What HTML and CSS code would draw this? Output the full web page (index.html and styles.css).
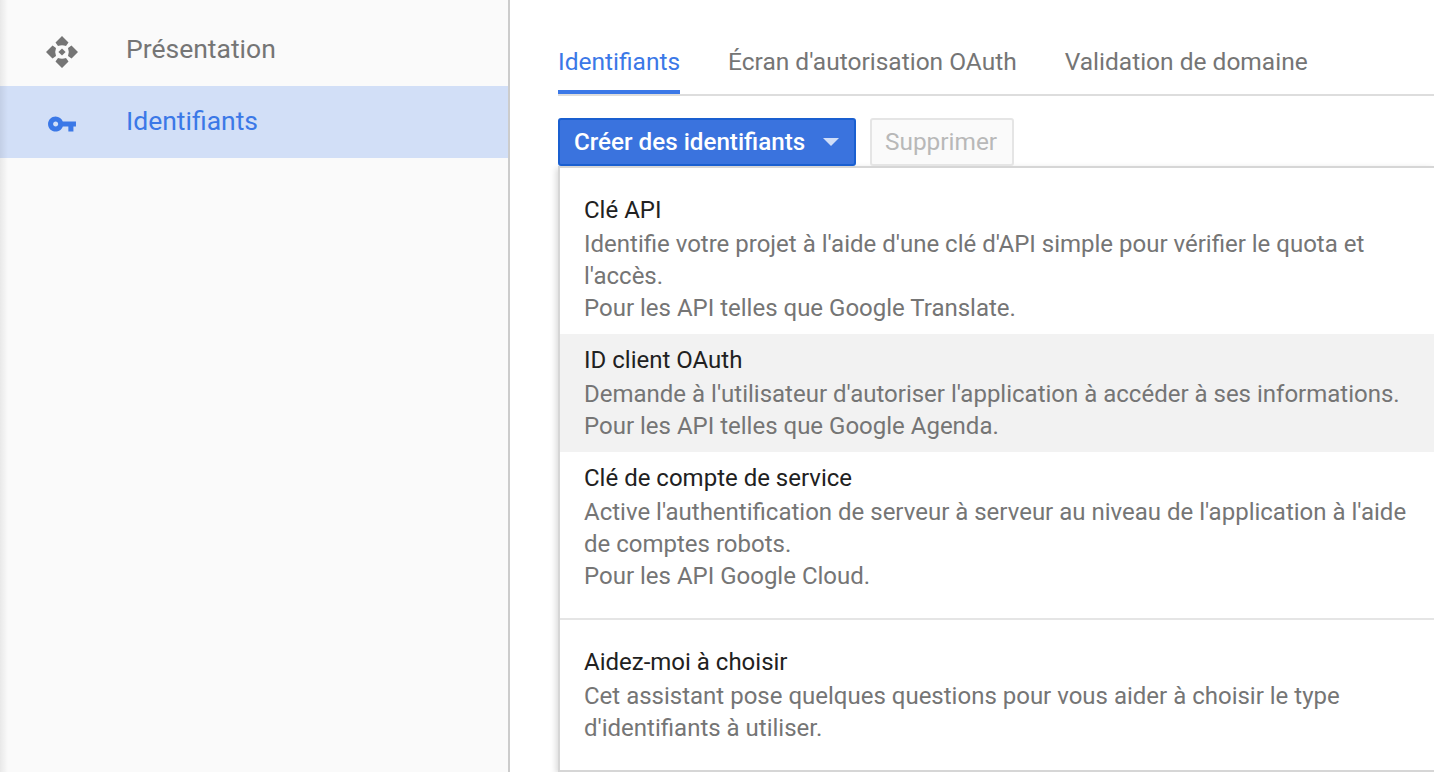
FILE: index.html
```html
<!DOCTYPE html>
<html lang="fr">
<head>
  <meta charset="UTF-8">
  <meta name="viewport" content="width=device-width, initial-scale=1.0">
  <title>Identifiants</title>
  <link rel="stylesheet" href="styles.css">
</head>
<body>

  <nav class="sidebar">
    <a class="nav-item">
      <svg class="nav-icon" viewBox="0 0 32 32" width="32" height="32">
        <g fill="#757575">
          <path d="M16 0l6.500 6.500-2.500 3.500q-4-1.600-8 0L9.500 6.500z"/>
          <path transform="rotate(90 16 16)" d="M16 0l6.500 6.500-2.500 3.500q-4-1.600-8 0L9.500 6.500z"/>
          <path transform="rotate(180 16 16)" d="M16 0l6.500 6.500-2.500 3.500q-4-1.600-8 0L9.500 6.500z"/>
          <path transform="rotate(270 16 16)" d="M16 0l6.500 6.500-2.500 3.500q-4-1.600-8 0L9.500 6.500z"/>
          <path d="M16 12.400l3.600 3.600-3.600 3.600-3.600-3.600z"/>
        </g>
      </svg>
      <span>Présentation</span>
    </a>
    <a class="nav-item active">
      <svg class="nav-icon" viewBox="-0.6 -0.6 25.2 25.2" width="32" height="32">
        <path fill="#3b78e7" d="M12.650 10C11.830 7.670 9.610 6 7 6c-3.310 0-6 2.690-6 6s2.690 6 6 6c2.610 0 4.830-1.670 5.650-4H17v4h4v-4h2v-4H12.650zM7 14c-1.100 0-2-.9-2-2s.9-2 2-2 2 .9 2 2-.9 2-2 2z"/>
      </svg>
      <span>Identifiants</span>
    </a>
  </nav>

  <main class="content">
    <div class="tabs">
      <a class="tab active">Identifiants</a>
      <a class="tab">Écran d'autorisation OAuth</a>
      <a class="tab">Validation de domaine</a>
    </div>

    <div class="toolbar">
      <button class="btn-primary">Créer des identifiants<span class="caret"></span></button>
      <button class="btn-disabled">Supprimer</button>
    </div>

    <div class="menu">
      <div class="menu-item">
        <div class="menu-title">Clé API</div>
        <div class="menu-desc">Identifie votre projet à l'aide d'une clé d'API simple pour vérifier le quota et l'accès.<br>Pour les API telles que Google Translate.</div>
      </div>
      <div class="menu-item hover">
        <div class="menu-title">ID client OAuth</div>
        <div class="menu-desc">Demande à l'utilisateur d'autoriser l'application à accéder à ses informations.<br>Pour les API telles que Google Agenda.</div>
      </div>
      <div class="menu-item">
        <div class="menu-title">Clé de compte de service</div>
        <div class="menu-desc">Active l'authentification de serveur à serveur au niveau de l'application à l'aide de comptes robots.<br>Pour les API Google Cloud.</div>
      </div>
      <div class="menu-divider"></div>
      <div class="menu-item">
        <div class="menu-title">Aidez-moi à choisir</div>
        <div class="menu-desc">Cet assistant pose quelques questions pour vous aider à choisir le type d'identifiants à utiliser.</div>
      </div>
    </div>
  </main>

</body>
</html>
```

FILE: styles.css
```css
html, body {
  height: 100%;
}

body {
  margin: 0;
  display: flex;
  overflow: hidden;
  font-family: Roboto, 'Liberation Sans', sans-serif;
  font-size: 24px;
  color: #212121;
  background-color: #fff;
}

.sidebar {
  position: relative;
  flex: 0 0 508px;
  padding-top: 14px;
  background-color: #fafafa;
  border-right: 2px solid #ccc;
}

/* soft shadow falling on the left edge */
.sidebar::before {
  content: '';
  position: absolute;
  top: 0;
  bottom: 0;
  left: 0;
  width: 8px;
  background: linear-gradient(to right, rgba(0, 0, 0, 0.07), rgba(0, 0, 0, 0));
}

.nav-item {
  display: flex;
  align-items: center;
  height: 72px;
  padding-left: 46px;
  font-size: 26.500px;
  color: #757575;
}

.nav-icon {
  margin-top: 4px;
}

.nav-item span {
  margin-left: 48px;
  margin-bottom: 4px;
}

.nav-item.active {
  background-color: #d2dff7;
  color: #3b78e7;
}

.content {
  flex: 1;
  min-width: 0;
  padding-left: 48px;
}

.tabs {
  display: flex;
  gap: 48px;
  height: 96px;
  box-sizing: border-box;
  padding-top: 44px;
  border-bottom: 2px solid #ddd;
}

.tab {
  height: 50px;
  box-sizing: border-box;
  font-size: 24.500px;
  line-height: 36px;
  color: #757575;
}

.tab.active {
  color: #3b78e7;
  border-bottom: 4px solid #3b78e7;
}

.toolbar {
  display: flex;
  gap: 14px;
  height: 48px;
  margin-top: 22px;
}

button {
  font-family: inherit;
  height: 48px;
  border-radius: 3px;
}

.btn-primary {
  display: flex;
  align-items: center;
  width: 298px;
  padding: 0 14px;
  font-size: 24.200px;
  font-weight: 500;
  color: #fff;
  background-color: #3a73de;
  border: 2px solid #1a5fd0;
}

.caret {
  margin-left: 18px;
  border-left: 8px solid transparent;
  border-right: 8px solid transparent;
  border-top: 8px solid #d0def8;
}

.btn-disabled {
  width: 144px;
  padding: 0 13px 2px;
  font-size: 24.400px;
  text-align: left;
  color: #b8b8b8;
  background-color: #fafafa;
  border: 2px solid #e5e5e5;
}

.menu {
  padding: 16px 0;
  background-color: #fff;
  border: 2px solid #d6d6d6;
  border-right: none;
  box-shadow: -2px 2px 6px rgba(0, 0, 0, 0.15);
}

.menu-item {
  padding: 10px 24px;
}

.menu-item.hover {
  background-color: #f2f2f2;
}

.menu-title {
  line-height: 32px;
  margin-bottom: 2px;
  color: #212121;
}

.menu-desc {
  line-height: 32px;
  color: #757575;
}

.menu-divider {
  height: 2px;
  margin: 16px 0;
  background-color: #e5e5e5;
}
```
